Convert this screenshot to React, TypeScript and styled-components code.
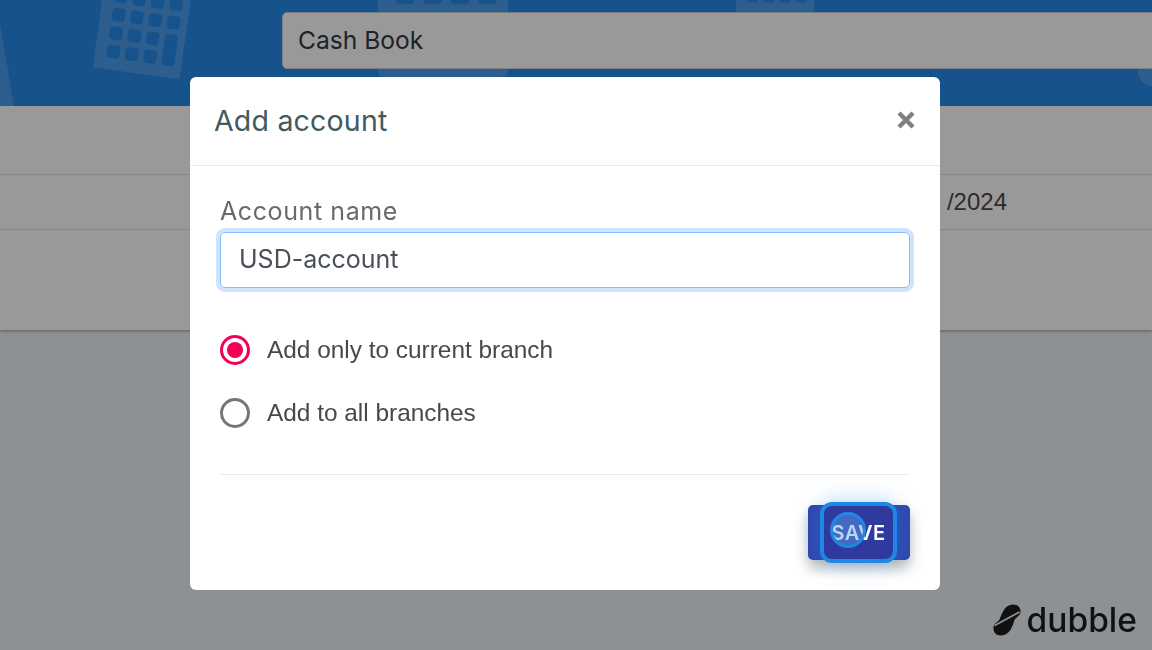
import React from 'react';
import styled, { createGlobalStyle } from 'styled-components';

const GlobalStyle = createGlobalStyle`
  html, body {
    margin: 0;
    height: 100%;
    overflow: hidden;
    background: #ecf2f7;
    font-family: "Liberation Sans", Arial, sans-serif;
  }
`;

const heading = `"Inter", "Noto Sans", sans-serif`;

const Header = styled.header`
  position: relative;
  height: 106px;
  background: #2689e9;
  overflow: hidden;
  display: flex;
  padding: 12px 0 0 282px;
  box-sizing: border-box;
`;

const Watermark = styled.svg<{ $x: number; $y: number; $rot: number }>`
  position: absolute;
  left: ${p => p.$x}px;
  top: ${p => p.$y}px;
  transform: rotate(${p => p.$rot}deg);
  fill: #ffffff;
  opacity: 0.17;
`;

const EdgeWedge = styled.span`
  position: absolute;
  left: 0;
  top: 0;
  width: 14px;
  height: 106px;
  background: #ffffff;
  opacity: 0.17;
  clip-path: polygon(0 24px, 100% 100%, 0 100%);
`;

const CornerBlob = styled.span`
  position: absolute;
  left: 1138px;
  top: 58px;
  width: 30px;
  height: 28px;
  border-radius: 50% 0 0 50%;
  background: #ffffff;
  opacity: 0.17;
`;

const BookInput = styled.div`
  position: relative;
  flex: 1;
  height: 57px;
  margin-right: -10px;
  box-sizing: border-box;
  border: 1px solid #ced4da;
  border-radius: 5px;
  background: #ffffff;
  color: #333a40;
  font-family: ${heading};
  font-size: 24.6px;
  line-height: 55px;
  padding-left: 15px;
`;

const Table = styled.section`
  height: 224px;
  background: #ffffff;
  box-shadow: 0 1px 3px rgba(0, 0, 0, 0.35);
`;

const Row = styled.div<{ $h: number }>`
  height: ${p => p.$h}px;
  box-sizing: border-box;
  border-bottom: 1px solid #dee2e6;
  display: flex;
  align-items: center;
  justify-content: flex-end;
  padding-right: 145px;
  color: #4a4a4a;
  font-size: 24px;
`;

const Backdrop = styled.div`
  position: fixed;
  inset: 0;
  background: rgba(0, 0, 0, 0.4);
`;

const Modal = styled.div`
  position: fixed;
  left: 190px;
  top: 77px;
  width: 750px;
  height: 513px;
  background: #fff;
  border-radius: 6px;
  display: flex;
  flex-direction: column;
`;

const ModalHead = styled.div`
  height: 89px;
  box-sizing: border-box;
  border-bottom: 1px solid #e9ecef;
  padding: 0 25px 0 24px;
  display: flex;
  align-items: center;
  justify-content: space-between;
`;

const Title = styled.h2`
  margin: 0 0 2px;
  font-family: ${heading};
  font-weight: 400;
  font-size: 28.5px;
  letter-spacing: 0.2px;
  color: #3f5a60;
`;

const Close = styled.svg`
  width: 18px;
  height: 18px;
  margin-bottom: 2px;
  fill: none;
  stroke: #7f7f7f;
  stroke-width: 4.4;
`;

const ModalBody = styled.div`
  padding: 30px 30px 0;
  display: flex;
  flex-direction: column;
`;

const Label = styled.label`
  font-family: ${heading};
  font-size: 25px;
  letter-spacing: 0.6px;
  line-height: 30px;
  color: #6a6a6a;
  margin-bottom: 6px;
`;

const NameInput = styled.div`
  height: 56px;
  box-sizing: border-box;
  border: 1px solid #80bdff;
  border-radius: 5px;
  box-shadow: 0 0 0 4px #cfe3fe;
  padding-left: 18px;
  font-family: ${heading};
  font-size: 25px;
  line-height: 53px;
  color: #495057;
`;

const Options = styled.div`
  margin-top: 45px;
  display: flex;
  flex-direction: column;
  gap: 29px;
  padding-bottom: 44px;
  border-bottom: 1px solid #e9ecef;
`;

const Option = styled.div`
  height: 34px;
  display: flex;
  align-items: center;
  gap: 17px;
  font-size: 24.4px;
  color: #45494d;
`;

const Radio = styled.span<{ $on?: boolean }>`
  width: 30px;
  height: 30px;
  box-sizing: border-box;
  border-radius: 50%;
  border: 3px solid ${p => (p.$on ? '#f50057' : '#757575')};
  display: flex;
  align-items: center;
  justify-content: center;

  &::after {
    content: '';
    width: 16px;
    height: 16px;
    border-radius: 50%;
    background: ${p => (p.$on ? '#f50057' : 'transparent')};
  }
`;

const Footer = styled.div`
  display: flex;
  justify-content: flex-end;
  padding-top: 30px;
`;

const SaveButton = styled.button`
  position: relative;
  width: 102px;
  height: 55px;
  border: 0;
  padding: 0;
  border-radius: 5px;
  background: #3047ad;
  color: #fff;
  font-family: ${heading};
  font-weight: 600;
  font-size: 20px;
  letter-spacing: 0.4px;
  box-shadow: 0 8px 14px rgba(0, 0, 0, 0.28);
`;

const FocusRing = styled.span`
  position: absolute;
  left: 12px;
  top: -3px;
  width: 77px;
  height: 61px;
  box-sizing: border-box;
  border: 4px solid #1e88e5;
  border-radius: 12px;
  background: #303a9e;
  box-shadow: 0 0 22px rgba(30, 136, 229, 0.35);
  display: flex;
  align-items: center;
  justify-content: center;
`;

const Ripple = styled.span`
  position: absolute;
  left: 22px;
  top: 7px;
  width: 36px;
  height: 36px;
  box-sizing: border-box;
  border-radius: 50%;
  border: 3px solid #1e88e5;
  background: rgba(90, 165, 235, 0.45);
`;

const Brand = styled.div`
  position: fixed;
  right: 15px;
  bottom: 11px;
  display: flex;
  align-items: center;
  gap: 6px;
  color: #111;
  font-family: ${heading};
  font-weight: 500;
  font-size: 33.5px;
  line-height: 38px;
`;

const Calculator = ({ x, y, w, rot }: { x: number; y: number; w: number; rot: number }) => {
  const keys = [];
  for (let r = 0; r < 4; r++) {
    for (let c = 0; c < 4; c++) {
      if (c === 3 && r >= 2) continue;
      keys.push(<rect key={`${r}-${c}`} x={12 + c * 18.5} y={33.5 + r * 18.5} width={13} height={13} rx={3} />);
    }
  }
  return (
    <Watermark $x={x} $y={y} $rot={rot} width={w} height={w * 1.3} viewBox="0 0 88 114.400">
      <mask id={`calc-${x}`}>
        <rect width="88" height="114.400" fill="#fff" />
        <g fill="#000">
          {keys}
          <rect x={67.5} y={70.5} width={13} height={31.5} rx={3} />
        </g>
      </mask>
      <rect width="88" height="114.400" rx="4" mask={`url(#calc-${x})`} />
    </Watermark>
  );
};

const App = () => (
  <>
    <GlobalStyle />
    <Header>
      <EdgeWedge />
      <Calculator x={100} y={-40} w={88} rot={8} />
      <Calculator x={378} y={-92} w={130} rot={0} />
      <Calculator x={736} y={-88} w={78} rot={0} />
      <CornerBlob />
      <BookInput>Cash Book</BookInput>
    </Header>
    <Table>
      <Row $h={69} />
      <Row $h={55}>/2024</Row>
    </Table>
    <Backdrop />
    <Modal>
      <ModalHead>
        <Title>Add account</Title>
        <Close viewBox="0 0 18 18">
          <path d="M2 2 16 16M16 2 2 16" />
        </Close>
      </ModalHead>
      <ModalBody>
        <Label>Account name</Label>
        <NameInput>USD-account</NameInput>
        <Options>
          <Option>
            <Radio $on />
            Add only to current branch
          </Option>
          <Option>
            <Radio />
            Add to all branches
          </Option>
        </Options>
        <Footer>
          <SaveButton>
            <FocusRing>SAVE</FocusRing>
            <Ripple />
          </SaveButton>
        </Footer>
      </ModalBody>
    </Modal>
    <Brand>
      <svg width="28" height="32" viewBox="0 0 28 32" fill="#111">
        <path d="M20 .5C25 .5 28 4 27.500 8 27 12 23 13 21.500 16 20 21 17 31.500 8 31.500 3 31.500 0 28 .5 23 1 19 5 18 6.500 15.500 9 9 12 .5 20 .5Z" />
        <path d="M1.500 21.500 26.500 8" fill="none" stroke="#8e9194" strokeWidth="1.800" />
      </svg>
      dubble
    </Brand>
  </>
);

export default App;
